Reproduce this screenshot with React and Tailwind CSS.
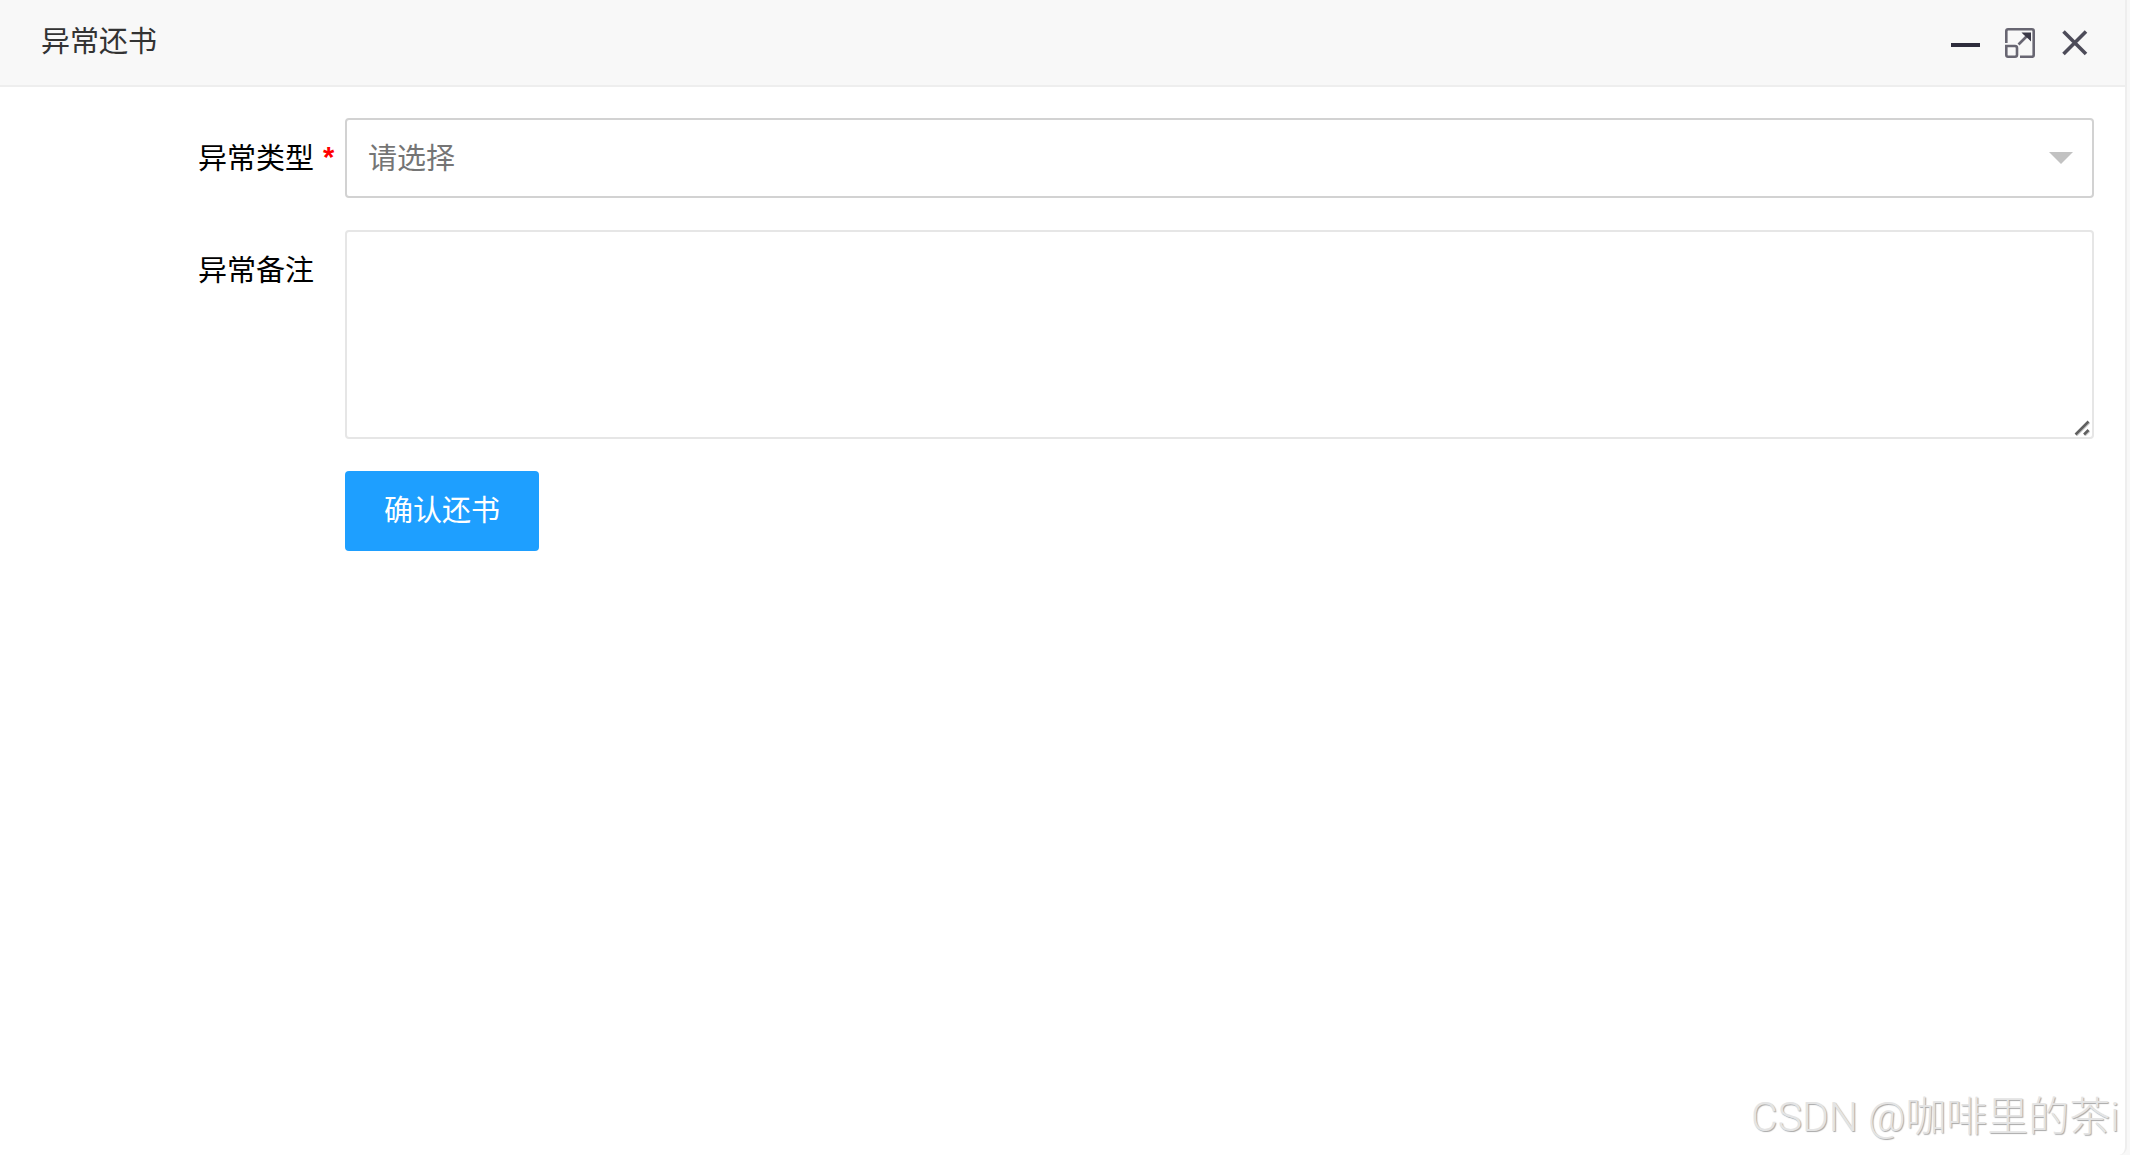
import { useState } from 'react';

const TIPOS = [
  { value: 'damaged', label: '图书损坏' },
  { value: 'lost', label: '图书丢失' },
  { value: 'overdue', label: '逾期归还' },
];

function MinimizeIcon() {
  return (
    <svg width="30" height="30" viewBox="0 0 30 30" aria-hidden="true">
      <path d="M1 15h29v4H1z" fill="#2e2d3c" />
    </svg>
  );
}

function MaximizeIcon() {
  return (
    <svg width="30" height="30" viewBox="0 0 30 30" fill="none" stroke="#686672" strokeWidth="2.6" aria-hidden="true">
      <path d="M1.300 15V3Q1.300 1.300 3 1.300H27Q28.700 1.300 28.700 3V27Q28.700 28.700 27 28.700H15" />
      <path d="M1.300 18H10Q12 18 12 20V27Q12 28.700 10 28.700H3Q1.300 28.700 1.300 27Z" />
      <path d="M13.500 16.500L22.500 7.500" />
      <path d="M16.500 4.500H26V13.500L23.500 11L19 7Z" fill="#3a3947" stroke="none" />
    </svg>
  );
}

function CloseIcon() {
  return (
    <svg width="30" height="30" viewBox="0 0 30 30" fill="none" stroke="#4d4c59" strokeWidth="3.6" aria-hidden="true">
      <path d="M3.500 3.500L26 26M26 3.500L3.500 26" />
    </svg>
  );
}

export default function App() {
  const [form, setForm] = useState({ tipo: '', observacion: '' });

  const handleSubmit = (e) => {
    e.preventDefault();
  };

  return (
    <div className="relative min-h-screen overflow-hidden bg-[#f8f8f8] pr-[3px] font-['Liberation_Sans','Noto_Sans_CJK_SC',sans-serif] text-[29px] leading-10 text-black">
      <div className="min-h-screen rounded-br-lg border-r-2 border-[#eeeeee] bg-white">
        <header className="flex h-[87px] items-center justify-between border-b-2 border-[#eeeeee] bg-[#f8f8f8] pl-[41px] pr-[35px]">
          <h1 className="pb-0.5 text-[#333333]">异常还书</h1>
          <div className="flex gap-[25px]">
            <button type="button" aria-label="最小化"><MinimizeIcon /></button>
            <button type="button" aria-label="最大化"><MaximizeIcon /></button>
            <button type="button" aria-label="关闭"><CloseIcon /></button>
          </div>
        </header>

        <form onSubmit={handleSubmit} className="grid grid-cols-[345px_1fr] gap-y-8 pr-[31px] pt-[31px]">
          <label htmlFor="tipo" className="flex h-20 items-center justify-end pt-0.5">
            异常类型
            <span className="w-[31px] pb-1 pl-[9px] font-bold text-[#ff0000]">*</span>
          </label>
          <div className="relative">
            <select
              id="tipo"
              value={form.tipo}
              onChange={(e) => setForm({ ...form, tipo: e.target.value })}
              className="block h-20 w-full appearance-none rounded border-2 border-[#d2d2d2] bg-white px-[21px] pt-0.5 text-[#757575] outline-none"
            >
              <option value="">请选择</option>
              {TIPOS.map((t) => (
                <option key={t.value} value={t.value}>{t.label}</option>
              ))}
            </select>
            <svg className="pointer-events-none absolute right-[21px] top-[34px]" width="24" height="12" viewBox="0 0 24 12" aria-hidden="true">
              <path d="M0 0h24L12 12z" fill="#c2c2c2" />
            </svg>
          </div>

          <label htmlFor="observacion" className="flex h-20 items-center justify-end pr-[31px] pt-0.5">
            异常备注
          </label>
          <div className="relative">
            <textarea
              id="observacion"
              value={form.observacion}
              onChange={(e) => setForm({ ...form, observacion: e.target.value })}
              className="block h-[209px] w-full resize-none rounded border-2 border-[#e6e6e6] bg-white px-[21px] py-3 outline-none"
            />
            {/* Esquina para redimensionar */}
            <svg className="pointer-events-none absolute bottom-[3px] right-1" width="16" height="16" viewBox="0 0 16 16" fill="none" aria-hidden="true">
              <path d="M2.500 15.500L15.500 2.500M11 15.500L15.500 11" stroke="#c8c8c8" strokeWidth="2" />
              <path d="M1.500 14.500L14.500 1.500M10 14.500L14.500 10" stroke="#606060" strokeWidth="2.500" />
            </svg>
          </div>

          <button
            type="submit"
            className="col-start-2 h-20 justify-self-start rounded bg-[#1e9fff] px-[39px] text-white"
          >
            确认还书
          </button>
        </form>
      </div>

      {/* Marca de agua */}
      <p className="pointer-events-none absolute bottom-2 right-[5px] w-[374px] whitespace-nowrap font-['Roboto','Noto_Sans_CJK_SC',sans-serif] text-[41px] font-light leading-[60px] text-[#e4e4e4] [text-shadow:1px_1px_1px_#a8a8a8]">
        CSDN @咖啡里的茶i
      </p>
    </div>
  );
}
